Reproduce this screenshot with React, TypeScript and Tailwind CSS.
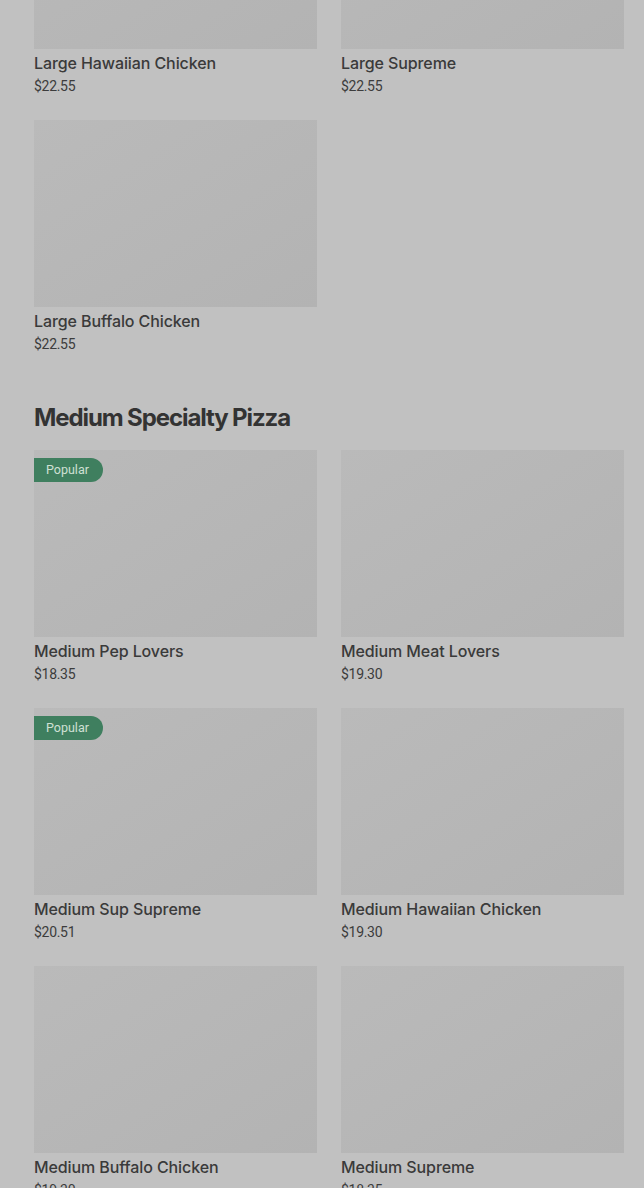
import React from "react";

type Item = { name: string; price: string; popular?: boolean };

const large: Item[] = [
  { name: "Large Hawaiian Chicken", price: "$22.55" },
  { name: "Large Supreme", price: "$22.55" },
  { name: "Large Buffalo Chicken", price: "$22.55" },
];

const medium: Item[] = [
  { name: "Medium Pep Lovers", price: "$18.35", popular: true },
  { name: "Medium Meat Lovers", price: "$19.30" },
  { name: "Medium Sup Supreme", price: "$20.51", popular: true },
  { name: "Medium Hawaiian Chicken", price: "$19.30" },
  { name: "Medium Buffalo Chicken", price: "$19.30" },
  { name: "Medium Supreme", price: "$18.35" },
];

function Card({ item }: { item: Item }) {
  return (
    <div className="flex flex-col">
      <div className="relative h-[187px] bg-gradient-to-br from-[#bababa] to-[#b3b3b3]">
        {item.popular && (
          <span className="absolute left-0 top-[8px] flex h-[24px] items-center rounded-r-full bg-[#3f7f5f] pl-[12px] pr-[14px] text-[12.5px] text-[#cfe0d4] [font-family:Roboto,sans-serif]">
            Popular
          </span>
        )}
      </div>
      <div className="mt-[2px] text-[16px] leading-6 font-medium tracking-[-0.1px] text-[#3a3a3a] [font-family:Inter,sans-serif]">
        {item.name}
      </div>
      <div className="mt-[1px] text-[14px] leading-5 text-[#3c3c3c] tracking-[-0.3px] [font-family:Roboto,sans-serif]">
        {item.price}
      </div>
    </div>
  );
}

export default function App() {
  return (
    <div className="min-h-[1188px] overflow-hidden bg-[#c1c1c1]">
      <div className="mt-[-138px] pl-[34px] pr-[20px]">
        <div className="grid grid-cols-2 gap-x-6 gap-y-6">
          {large.map((it) => (
            <Card key={it.name} item={it} />
          ))}
        </div>
        <h2 className="mt-[48px] mb-[16px] text-[24px] leading-8 font-bold tracking-[-1.1px] text-[#333333] [font-family:Inter,sans-serif]">
          Medium Specialty Pizza
        </h2>
        <div className="grid grid-cols-2 gap-x-6 gap-y-6">
          {medium.map((it) => (
            <Card key={it.name} item={it} />
          ))}
        </div>
      </div>
    </div>
  );
}
